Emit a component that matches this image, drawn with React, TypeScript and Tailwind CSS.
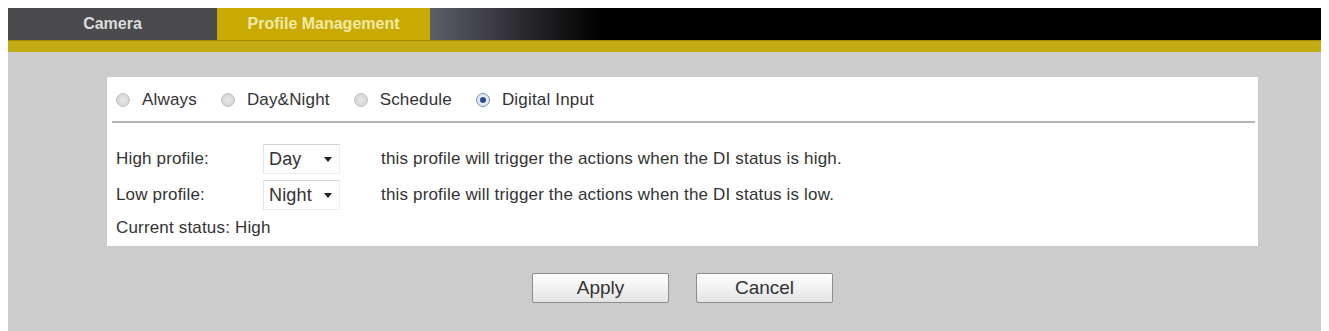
import * as React from "react"

const font = { fontFamily: '"Liberation Sans", Arial, sans-serif' }

function Radio({ label, checked }: { label: string; checked?: boolean }) {
  return (
    <label className="flex items-center gap-[12px]">
      <span
        className={
          "flex h-[14px] w-[14px] items-center justify-center rounded-full border " +
          (checked
            ? "border-[#7f93ad] bg-[radial-gradient(circle,#ffffff,#cfd8e4)]"
            : "border-[#c4c4c4] bg-[radial-gradient(circle,#e8e8e8,#cdcdcd)]")
        }
      >
        {checked && <span className="h-[6px] w-[6px] rounded-full bg-[#284f8c]" />}
      </span>
      <span>{label}</span>
    </label>
  )
}

function Select({ value }: { value: string }) {
  return (
    <div className="flex h-[30px] w-[77px] items-center justify-between border border-t-[#d4d4d4] border-l-[#e4e4e4] border-r-[#eeeeee] border-b-[#eeeeee] bg-white pl-[5px] pr-[7px] text-[18px]">
      <span>{value}</span>
      <span className="h-0 w-0 border-x-[4px] border-t-[5px] border-x-transparent border-t-[#222]" />
    </div>
  )
}

export default function App() {
  return (
    <div className="h-[331px] bg-white px-[8px] pt-[8px] text-[17px] tracking-[0.17px] text-[#333]" style={font}>
      <div className="flex h-[32px] tracking-normal">
        <div className="flex w-[209px] items-center justify-center bg-[#4b4b4d] text-[16px] font-bold text-[#dcdcdc]">
          Camera
        </div>
        <div className="flex w-[213px] items-center justify-center bg-[#c9aa02] text-[16px] font-bold text-[#f2e9a8]">
          Profile Management
        </div>
        <div className="flex-1 bg-[linear-gradient(to_right,#5e5e68,#000_170px)]" />
      </div>
      <div className="h-[12px] border-t border-[#a08a0a] bg-[#c3ab14]" />
      <div className="h-[279px] bg-[#cccccc] pt-[25px]">
        <div className="ml-[99px] w-[1151px]">
          <div className="h-[169px] bg-white">
            <div className="flex h-[44px] items-center gap-[24px] pl-[9px] pt-[2px]">
              <Radio label="Always" />
              <Radio label="Day&Night" />
              <Radio label="Schedule" />
              <Radio label="Digital Input" checked />
            </div>
            <div className="ml-[5px] mr-[3px] h-[2px] bg-[#b4b4b4]" />
            <div className="pl-[9px] pt-[18px]">
              <div className="flex h-[36px] items-center">
                <span className="w-[147px]">High profile:</span>
                <Select value="Day" />
                <span className="ml-[41px]">this profile will trigger the actions when the DI status is high.</span>
              </div>
              <div className="flex h-[36px] items-center">
                <span className="w-[147px]">Low profile:</span>
                <Select value="Night" />
                <span className="ml-[41px]">this profile will trigger the actions when the DI status is low.</span>
              </div>
              <div className="mt-[2px]">Current status: High</div>
            </div>
          </div>
          <div className="mt-[27px] flex justify-center gap-[27px] tracking-normal">
            <button className="h-[30px] w-[137px] rounded-[2px] border border-[#8c8c8c] bg-[linear-gradient(#ffffff,#e4e4e4)] text-[19px] text-[#333]">
              Apply
            </button>
            <button className="h-[30px] w-[137px] rounded-[2px] border border-[#8c8c8c] bg-[linear-gradient(#ffffff,#e4e4e4)] text-[19px] text-[#333]">
              Cancel
            </button>
          </div>
        </div>
      </div>
    </div>
  )
}
